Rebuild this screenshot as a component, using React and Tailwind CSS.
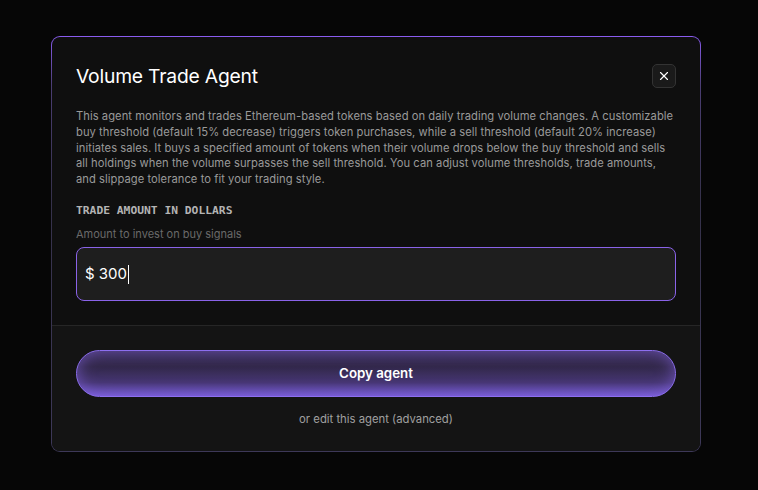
import { X } from 'lucide-react'

export default function App() {
  return (
    <div className="min-h-[490px] w-full bg-[#060606] pt-[36px] pl-[51px]" style={{ fontFamily: 'Inter, "Noto Sans", sans-serif' }}>
      <div className="w-[650px] rounded-[9px] p-px bg-[linear-gradient(180deg,#8a5cf0_0%,#4a3d72_12%,#35314a_40%,#3d3858_100%)]">
        <div className="rounded-[8px] bg-[#0f0f0f] overflow-hidden">
          {/* top */}
          <div className="px-6 pt-[25px] pb-6">
            <div className="flex items-center justify-between">
              <h1 className="text-[19.3px] text-white tracking-[-0.2px]">Volume Trade Agent</h1>
              <button className="w-6 h-6 rounded-[5px] border border-[#333] bg-[#1a1a1a] flex items-center justify-center text-white">
                <X size={14} strokeWidth={2} />
              </button>
            </div>
            <p className="mt-[18px] text-[11.2px] leading-[15.8px] tracking-[0.05px] text-[#9a9a9a]">
              This agent monitors and trades Ethereum-based tokens based on daily trading volume changes. A customizable buy threshold (default 15% decrease) triggers token purchases, while a sell threshold (default 20% increase) initiates sales. It buys a specified amount of tokens when their volume drops below the buy threshold and sells all holdings when the volume surpasses the sell threshold. You can adjust volume thresholds, trade amounts, and slippage tolerance to fit your trading style.
            </p>
            <div className="mt-[15px] text-[11.3px] font-bold text-[#b4b4b4]" style={{ fontFamily: '"DejaVu Sans Mono", monospace' }}>
              TRADE AMOUNT IN DOLLARS
            </div>
            <div className="mt-[6px] text-[11px] text-[#6a6a6a]">Amount to invest on buy signals</div>
            <div className="mt-[5px] h-[54px] rounded-[8px] border border-[#8a63e8] bg-[#1e1e1e] flex items-center px-[8px] text-[15px] text-white">
              <span>$ 300</span>
              <span className="w-px h-[19px] bg-white ml-px"></span>
            </div>
          </div>
          {/* bottom */}
          <div className="border-t border-[#262626] bg-[#141414] px-6 pt-[24px] pb-[23px]">
            <button className="w-full h-[47px] rounded-full border border-[#8d6ff0] text-white text-[13.3px] font-semibold bg-[linear-gradient(180deg,#3a2e58_0%,#32284a_35%,#463673_70%,#7258cc_100%)] shadow-[inset_0_0_16px_rgba(140,105,240,0.55)]">
              Copy agent
            </button>
            <div className="mt-[14px] text-center text-[11.3px] text-[#a0a0a0]">or edit this agent (advanced)</div>
          </div>
        </div>
      </div>
    </div>
  )
}
